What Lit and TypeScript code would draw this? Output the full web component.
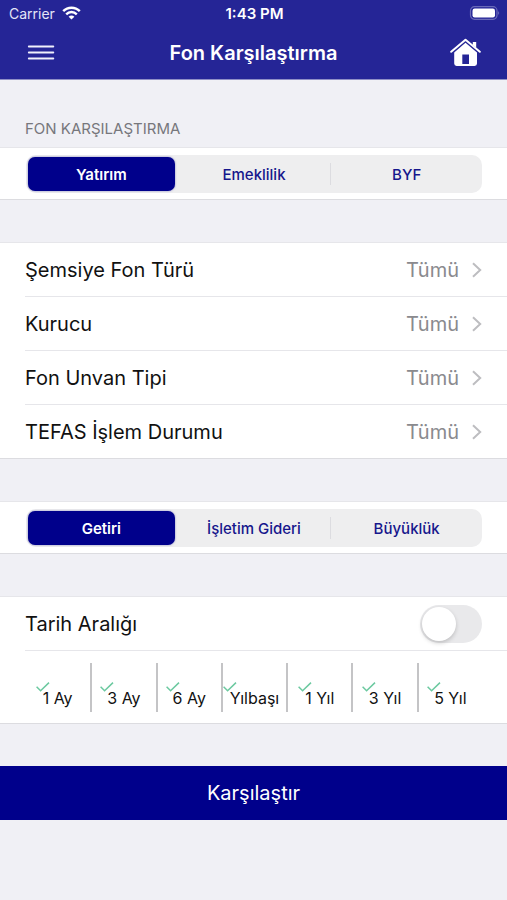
import { LitElement, html, css, svg } from "lit";
import { customElement, property, state } from "lit/decorators.js";

@customElement("segmented-control")
class SegmentedControl extends LitElement {
  @property() name = "";
  @property({ attribute: false }) options: string[] = [];
  @state() private selected = 0;

  static styles = css`
    :host {
      display: block;
    }
    .bar {
      display: grid;
      grid-template-columns: repeat(3, 1fr);
      margin: 0;
      padding: 2px;
      gap: 6px;
      border: 0;
      border-radius: 10px;
      background: #eeeeef;
    }
    .segment {
      position: relative;
      display: flex;
      align-items: center;
      justify-content: center;
      height: 34px;
      border-radius: 7px;
      color: #16168c;
      font-size: 15px;
      font-weight: 500;
      cursor: pointer;
    }
    .segment.on {
      background: #00008b;
      color: #fff;
      font-weight: 600;
      box-shadow: 0 0 2px #00008b80;
    }
    .segment.divided::before {
      content: "";
      position: absolute;
      left: -3px;
      top: 6px;
      bottom: 6px;
      width: 1px;
      background: #dcdce0;
    }
    .radio {
      position: absolute;
      inset: 0;
      margin: 0;
      width: 100%;
      height: 100%;
      opacity: 0;
      cursor: pointer;
    }
  `;

  render() {
    return html`<div class="bar" role="radiogroup">
      ${this.options.map((label, i) => {
        const on = i === this.selected;
        const divided = i > 0 && !on && i - 1 !== this.selected;
        return html`<label class="segment ${on ? "on" : ""} ${divided ? "divided" : ""}">
          <input class="radio" type="radio" name=${this.name} .checked=${on}
            @change=${() => (this.selected = i)} />
          <span>${label}</span>
        </label>`;
      })}
    </div>`;
  }
}

@customElement("app-root")
class AppRoot extends LitElement {
  @state() private periods = ["1 Ay", "3 Ay", "6 Ay", "Yılbaşı", "1 Yıl", "3 Yıl", "5 Yıl"].map(
    (label) => ({ label, on: true })
  );

  static styles = css`
    :host {
      display: block;
      min-height: 100vh;
      background: #f0f0f5;
      color: #111;
      font-family: Inter, "Liberation Sans", sans-serif;
      font-size: 20px;
    }
    button {
      font: inherit;
      color: inherit;
      border: 0;
      padding: 0;
      background: none;
      cursor: pointer;
    }
    svg {
      display: block;
    }
    .header {
      background: #252596;
      color: #fff;
      border-bottom: 1px solid #8f8fc6;
    }
    .status {
      display: grid;
      grid-template-columns: 1fr auto 1fr;
      align-items: center;
      height: 26px;
      padding: 0 7px 0 9px;
      font-size: 14px;
    }
    .carrier {
      display: flex;
      align-items: center;
      gap: 7px;
      color: #e4e4f6;
    }
    .time {
      font-size: 15px;
      font-weight: 600;
    }
    .battery {
      justify-self: end;
    }
    .nav {
      display: grid;
      grid-template-columns: 1fr auto 1fr;
      align-items: center;
      height: 53px;
      padding: 0 26px;
    }
    .title {
      margin: 0;
      font-size: 20px;
      font-weight: 600;
    }
    .home {
      justify-self: end;
    }
    .caption {
      margin: 0;
      padding: 38px 25px 8px;
      font-size: 15px;
      line-height: 21px;
      font-weight: 400;
      color: #77777c;
    }
    .card {
      background: #fff;
      border-top: 1px solid #e6e6ea;
      border-bottom: 1px solid #dcdce0;
      margin-bottom: 42px;
    }
    .segments {
      padding: 7px 25px 6px 26px;
    }
    .row {
      display: flex;
      align-items: center;
      justify-content: space-between;
      box-sizing: border-box;
      height: 53px;
      padding-right: 25px;
      width: 100%;
      text-align: left;
    }
    .item {
      margin-left: 25px;
    }
    .item + .item {
      border-top: 1px solid #e6e6ea;
    }
    .value {
      display: flex;
      align-items: center;
      gap: 13px;
      color: #8a8a8e;
    }
    .switch {
      appearance: none;
      display: flex;
      width: 62px;
      height: 38px;
      margin: 0;
      padding: 2px;
      box-sizing: border-box;
      border-radius: 19px;
      background: #e9e9eb;
      cursor: pointer;
    }
    .switch::before {
      content: "";
      width: 34px;
      height: 34px;
      border-radius: 17px;
      background: #fff;
      box-shadow: 0 2px 4px #00000030;
    }
    .switch:checked {
      justify-content: flex-end;
      background: #34c759;
    }
    .periods {
      display: grid;
      grid-template-columns: repeat(7, 1fr);
      padding: 12px 25px 11px 0;
    }
    .period {
      display: flex;
      align-items: flex-end;
      justify-content: center;
      height: 49px;
      box-sizing: border-box;
      padding-bottom: 4px;
      font-size: 16px;
      line-height: 20px;
      cursor: pointer;
    }
    .period + .period {
      border-left: 2px solid #c4c4c6;
    }
    .label {
      position: relative;
    }
    .check {
      position: absolute;
      left: -7px;
      top: -6px;
    }
    .box {
      position: absolute;
      inset: 0;
      margin: 0;
      width: 100%;
      height: 100%;
      opacity: 0;
      cursor: pointer;
    }
    .submit {
      display: block;
      width: 100%;
      height: 54px;
      background: #00008b;
      color: #fff;
    }
  `;

  private toggle(index: number) {
    this.periods = this.periods.map((p, i) => (i === index ? { ...p, on: !p.on } : p));
  }

  render() {
    return html`
      <header class="header">
        <div class="status">
          <span class="carrier">Carrier
            <svg width="19" height="14" viewBox="0 0 19 14" fill="none" stroke="#fff" stroke-width="2.4">
              <path d="M1.2 5.2C5.8 .5 13.2 .5 17.8 5.2" />
              <path d="M4.2 8.3C7.2 5.3 11.8 5.3 14.8 8.3" />
              <path d="M9.5 13.6 6.6 10.7C8.3 9.2 10.7 9.2 12.4 10.7Z" fill="#fff" stroke="none" />
            </svg>
          </span>
          <span class="time">1:43 PM</span>
          <svg class="battery" width="31" height="14" viewBox="0 0 31 14">
            <rect x="1.5" y=".7" width="26.5" height="12.6" rx="4" fill="none" stroke="#6a6ab8" stroke-width="1.2" />
            <rect x="3.5" y="2.6" width="22.5" height="8.8" rx="2.2" fill="#fff" />
            <path d="M29.3 4.8Q31 7 29.3 9.2Z" fill="#8585c8" />
          </svg>
        </div>
        <div class="nav">
          <button class="menu" aria-label="Menü">
            <svg width="30" height="16" viewBox="0 0 30 16" stroke="#f0f0fc" stroke-width="1.9" stroke-linecap="round">
              <path d="M2.8 1.5H27.3M2.8 7.5H27.3M2.8 13.5H27.3" />
            </svg>
          </button>
          <h1 class="title">Fon Karşılaştırma</h1>
          <button class="home" aria-label="Ana sayfa">
            <svg width="31" height="29" viewBox="0 0 31 29">
              <path d="M1.2 13.8 15.5 1.8 29.8 13.8" fill="none" stroke="#fff" stroke-width="2" stroke-linecap="round" stroke-linejoin="round" />
              <path d="M22.8 4H26.2V9.8L22.8 7Z" fill="#fff" />
              <path fill="#fff" fill-rule="evenodd" d="M15.5 4.8 27 14.4V25.6Q27 28 24.6 28H6.6Q4.2 28 4.2 25.6V14.4ZM12.3 16.5V26H19V16.5Z" />
            </svg>
          </button>
        </div>
      </header>
      <main>
        <h2 class="caption">FON KARŞILAŞTIRMA</h2>
        <section class="card segments">
          <segmented-control name="type" .options=${["Yatırım", "Emeklilik", "BYF"]}></segmented-control>
        </section>
        <section class="card">
          ${["Şemsiye Fon Türü", "Kurucu", "Fon Unvan Tipi", "TEFAS İşlem Durumu"].map(
            (label) => html`<div class="item">
              <button class="row">
                <span>${label}</span>
                <span class="value">Tümü
                  <svg width="10" height="16" viewBox="0 0 10 16" fill="none" stroke="#bdbdc0" stroke-width="2">
                    <path d="M1 1.2 8.2 8 1 14.8" />
                  </svg>
                </span>
              </button>
            </div>`
          )}
        </section>
        <section class="card segments">
          <segmented-control name="metric" .options=${["Getiri", "İşletim Gideri", "Büyüklük"]}></segmented-control>
        </section>
        <section class="card">
          <div class="item">
            <label class="row">
              <span>Tarih Aralığı</span>
              <input class="switch" type="checkbox" role="switch" />
            </label>
          </div>
          <div class="item">
            <div class="periods">
              ${this.periods.map(
                (p, i) => html`<label class="period">
                  <span class="label">
                    <input class="box" type="checkbox" .checked=${p.on} @change=${() => this.toggle(i)} />
                    <svg class="check" width="14" height="10" viewBox="0 0 14 10" fill="none" stroke="#6cc9a0" stroke-width="1.5">
                      ${p.on ? svg`<path d="M.6 4.8 4.6 8.8 13 .6" />` : null}
                    </svg>
                    ${p.label}
                  </span>
                </label>`
              )}
            </div>
          </div>
        </section>
        <button class="submit">Karşılaştır</button>
      </main>
    `;
  }
}
